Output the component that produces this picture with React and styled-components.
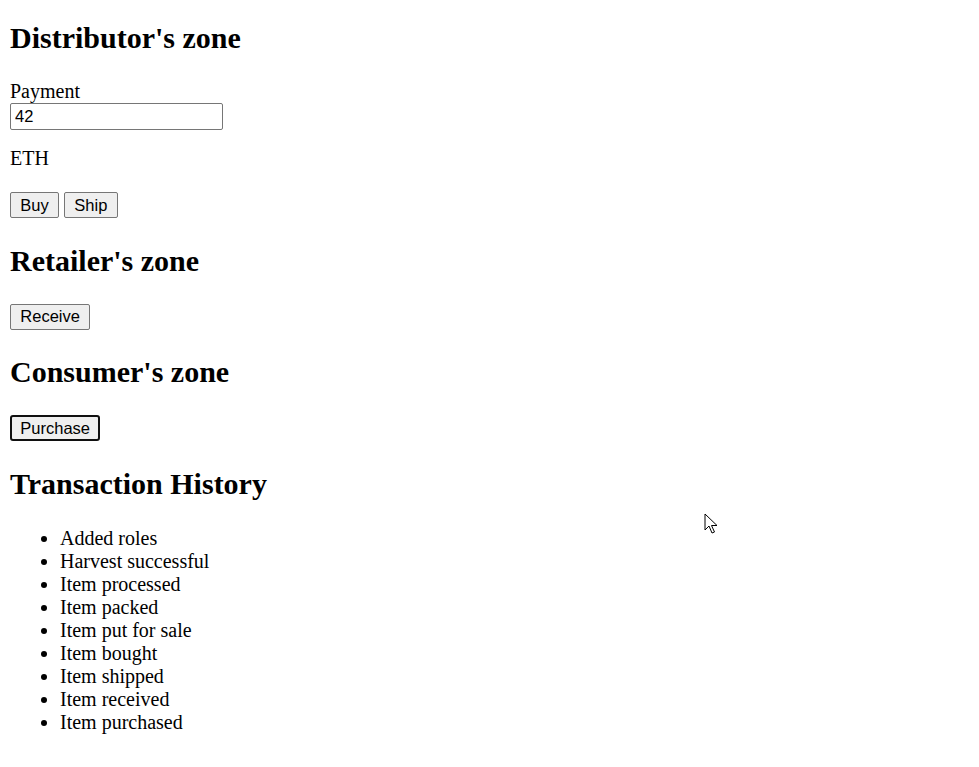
import React from 'react';
import styled, { createGlobalStyle } from 'styled-components';

const GlobalStyle = createGlobalStyle`
    html, body {
        margin: 0;
        padding: 0;
        background: #ffffff;
    }
    body {
        font-family: "Liberation Serif", "Times New Roman", serif;
        font-size: 20px;
        color: #000000;
    }
`;

const Page = styled.div`
    padding: 1px 10px 10px 10px;
    position: relative;
    min-height: 767px;
    box-sizing: border-box;
`;

const Heading = styled.h2`
    font-size: 30px;
    font-weight: bold;
    line-height: 34px;
    margin: ${p => (p.$first ? '20px 0 24px' : '25.8px 0')};
`;

const Field = styled.div`
    margin: 24px 0 0;
`;

const Label = styled.label`
    display: block;
    line-height: 24px;
`;

const PaymentInput = styled.input`
    display: block;
    box-sizing: border-box;
    width: 213px;
    height: 27px;
    margin: 0;
    padding: 1px 4px;
    border: 1px solid #767676;
    border-radius: 2px;
    font-family: "Liberation Sans", Arial, sans-serif;
    font-size: 16.5px;
    color: #000000;
    background: #ffffff;
`;

const Text = styled.p`
    margin: 17px 0 0;
    line-height: 23px;
`;

const ButtonRow = styled.div`
    margin: 22px 0;
    display: flex;
    gap: 5px;
`;

const Button = styled.button`
    box-sizing: border-box;
    height: 26px;
    padding: ${p => (p.$focused ? '0 8.3px' : '0 9.3px')};
    margin: 0;
    border: ${p => (p.$focused ? '2px solid #101010' : '1px solid #767676')};
    border-radius: ${p => (p.$focused ? '3px' : '2px')};
    background: #efefef;
    font-family: "Liberation Sans", Arial, sans-serif;
    font-size: 16.5px;
    line-height: 1;
    color: #000000;
`;

const History = styled.ul`
    margin: 22px 0;
    padding-left: 50px;
    line-height: 23px;
    list-style: disc;
`;

const Cursor = styled.svg`
    position: absolute;
    left: 704px;
    top: 513px;
    pointer-events: none;
`;

const events = [
    'Added roles',
    'Harvest successful',
    'Item processed',
    'Item packed',
    'Item put for sale',
    'Item bought',
    'Item shipped',
    'Item received',
    'Item purchased',
];

export default function App() {
    return (
        <Page>
            <GlobalStyle />
            <Heading $first>Distributor's zone</Heading>
            <Field>
                <Label htmlFor="payment">Payment</Label>
                <PaymentInput id="payment" type="text" defaultValue="42" />
            </Field>
            <Text>ETH</Text>
            <ButtonRow>
                <Button>Buy</Button>
                <Button>Ship</Button>
            </ButtonRow>

            <Heading>Retailer's zone</Heading>
            <ButtonRow>
                <Button>Receive</Button>
            </ButtonRow>

            <Heading>Consumer's zone</Heading>
            <ButtonRow>
                <Button $focused>Purchase</Button>
            </ButtonRow>

            <Heading>Transaction History</Heading>
            <History>
                {events.map(e => <li key={e}>{e}</li>)}
            </History>

            <Cursor width="14" height="22" viewBox="0 0 14 22">
                <path d="M1 1 L1 17 L5 13 L8 20 L10.5 19 L7.5 12.5 L13 12.5 Z"
                    fill="#ffffff" stroke="#000000" strokeWidth="1" strokeLinejoin="miter" />
            </Cursor>
        </Page>
    );
}
